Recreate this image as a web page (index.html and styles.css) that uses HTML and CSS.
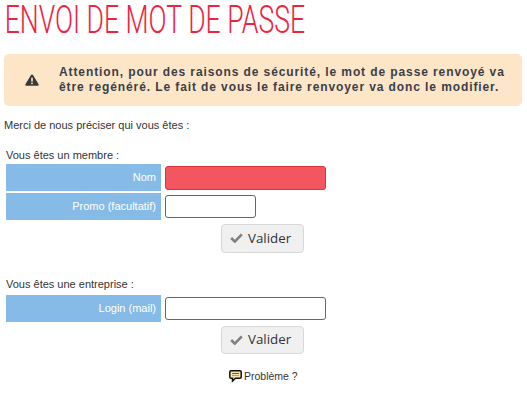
FILE: index.html
```html
<!DOCTYPE html>
<html lang="fr">
<head>
    <meta charset="UTF-8">
    <title>Envoi de mot de passe</title>
    <link rel="stylesheet" href="styles.css">
</head>
<body>
    <h1>ENVOI DE MOT DE PASSE</h1>

    <div class="alert">
        <svg class="alert-icon" width="14" height="12" viewBox="0 0 14 12">
            <path d="M7 0.5c.5 0 .8.2 1 .6l5.600 9.200c.4.7 0 1.400-.8 1.400H1.200c-.8 0-1.200-.7-.8-1.400L6 1.100c.2-.4.5-.6 1-.6z" fill="#3a3a3a"/>
            <rect x="6.200" y="3.600" width="1.600" height="4" fill="#fde5c8"/>
            <rect x="6.200" y="8.600" width="1.600" height="1.600" fill="#fde5c8"/>
        </svg>
        <p>Attention, pour des raisons de sécurité, le mot de passe renvoyé va être regénéré. Le fait de vous le faire renvoyer va donc le modifier.</p>
    </div>

    <p class="intro">Merci de nous préciser qui vous êtes :</p>

    <form class="bloc bloc-membre">
        <p class="bloc-titre">Vous êtes un membre :</p>
        <div class="ligne">
            <label class="champ-label">Nom</label>
            <input class="champ champ-erreur" type="text">
        </div>
        <div class="ligne">
            <label class="champ-label">Promo (facultatif)</label>
            <input class="champ champ-court" type="text">
        </div>
        <div class="actions">
            <button class="btn" type="button">
                <svg width="13" height="11" viewBox="0 0 13 11"><path d="M1.200 6l3.600 3.600L11.800 2.400" fill="none" stroke="#808080" stroke-width="2.600"/></svg>
                Valider
            </button>
        </div>
    </form>

    <form class="bloc bloc-entreprise">
        <p class="bloc-titre">Vous êtes une entreprise :</p>
        <div class="ligne">
            <label class="champ-label">Login (mail)</label>
            <input class="champ" type="text">
        </div>
        <div class="actions">
            <button class="btn" type="button">
                <svg width="13" height="11" viewBox="0 0 13 11"><path d="M1.200 6l3.600 3.600L11.800 2.400" fill="none" stroke="#808080" stroke-width="2.600"/></svg>
                Valider
            </button>
        </div>
    </form>

    <div class="probleme">
        <svg width="13" height="13" viewBox="0 0 13 13">
            <path d="M2 .8h9c.7 0 1.200.5 1.200 1.200v5c0 .7-.5 1.200-1.200 1.200H6.500L3.500 11V8.200H2C1.300 8.200.8 7.700.8 7V2C.8 1.300 1.300.8 2 .8z" fill="#f3e3b0" stroke="#111" stroke-width="1.500"/>
            <rect x="3" y="3" width="7" height="1" fill="#6a5a7a"/>
            <rect x="3" y="5" width="7" height="1" fill="#c89a50"/>
        </svg>
        <span>Problème ?</span>
    </div>
</body>
</html>
```

FILE: styles.css
```css
body {
    margin: 0;
    padding: 0 5px 0 4px;
    background-color: #fff;
    color: #333;
    font-family: "Liberation Sans", Arial, sans-serif;
    font-size: 11px;
}
h1 {
    width: fit-content;
    margin: 0;
    padding-left: 1px;
    height: 54px;
    color: #f0233f;
    font-family: Roboto, "Liberation Sans", sans-serif;
    font-size: 38px;
    font-weight: 300;
    line-height: 40px;
    white-space: nowrap;
    transform: scaleX(0.7);
    transform-origin: left top;
}
.alert {
    display: flex;
    align-items: center;
    height: 52px;
    box-sizing: border-box;
    padding: 0 14px 0 21px;
    background-color: #fde5c8;
    border-radius: 5px;
}
.alert-icon {
    flex: none;
    margin-right: 20px;
}
.alert p {
    margin: 0;
    font-size: 12px;
    font-weight: bold;
    line-height: 15.500px;
    letter-spacing: 0.9px;
    color: #3a3f47;
}
.intro {
    margin: 12px 0 0;
    line-height: 14px;
}
.bloc {
    padding-left: 2px;
}
.bloc-membre {
    margin-top: 15px;
}
.bloc-entreprise {
    margin-top: 25px;
}
.bloc-titre {
    margin: 0;
    height: 17px;
    line-height: 16px;
}
.bloc-entreprise .bloc-titre {
    line-height: 12px;
}
.ligne {
    display: flex;
    align-items: center;
    gap: 4px;
    height: 27px;
    margin-bottom: 2px;
}
.champ-label {
    flex: none;
    width: 155px;
    height: 27px;
    box-sizing: border-box;
    padding-right: 5px;
    background-color: #85bbe6;
    color: #fff;
    line-height: 27px;
    text-align: right;
}
.champ {
    width: 161px;
    height: 23px;
    box-sizing: border-box;
    padding: 0 4px;
    background-color: #fff;
    border: 1px solid #666;
    border-radius: 3px;
    outline: none;
}
.champ-court {
    width: 91px;
}
.champ-erreur {
    height: 24px;
    background-color: #f45660;
    border-color: #d9333f;
}
.actions {
    display: flex;
    padding: 2px 0 0 215px;
}
.btn {
    display: flex;
    align-items: center;
    gap: 5px;
    width: 83px;
    height: 29px;
    box-sizing: border-box;
    padding: 0 0 2px 8px;
    background-color: #f0f0f0;
    border: 1px solid #d8d8d8;
    border-radius: 4px;
    color: #333;
    font-family: "Open Sans", "Liberation Sans", sans-serif;
    font-size: 13.300px;
}
.bloc-entreprise .btn {
    height: 28px;
}
.probleme {
    display: flex;
    align-items: center;
    gap: 2px;
    margin: 15px 0 0 225px;
    font-size: 10.500px;
    line-height: 14px;
}
```
